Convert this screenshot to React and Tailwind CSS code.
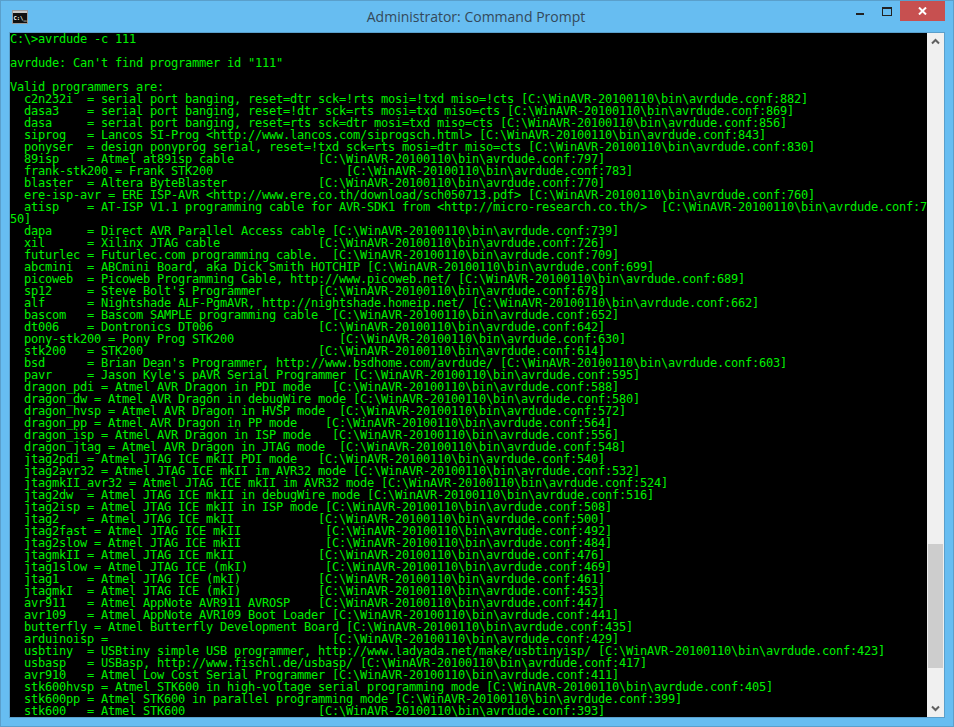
const P = "C:\\WinAVR-20100110\\bin\\avrdude.conf:";
const r = (head, col, n) => (col ? head.padEnd(col, " ") : head + " ") + "[" + P + n + "]";

const lines = [
  "C:\\>avrdude -c 111",
  " ",
  "avrdude: Can't find programmer id \"111\"",
  " ",
  "Valid programmers are:",
  r("  c2n232i  = serial port banging, reset=dtr sck=!rts mosi=!txd miso=!cts", 0, 882),
  r("  dasa3    = serial port banging, reset=!dtr sck=rts mosi=txd miso=cts", 0, 869),
  r("  dasa     = serial port banging, reset=rts sck=dtr mosi=txd miso=cts", 0, 856),
  r("  siprog   = Lancos SI-Prog <http://www.lancos.com/siprogsch.html>", 0, 843),
  r("  ponyser  = design ponyprog serial, reset=!txd sck=rts mosi=dtr miso=cts", 0, 830),
  r("  89isp    = Atmel at89isp cable", 44, 797),
  r("  frank-stk200 = Frank STK200", 48, 783),
  r("  blaster  = Altera ByteBlaster", 44, 770),
  r("  ere-isp-avr = ERE ISP-AVR <http://www.ere.co.th/download/sch050713.pdf>", 0, 760),
  "  atisp    = AT-ISP V1.1 programming cable for AVR-SDK1 from <http://micro-research.co.th/>  [" + P + "7",
  "50]",
  r("  dapa     = Direct AVR Parallel Access cable", 46, 739),
  r("  xil      = Xilinx JTAG cable", 44, 726),
  r("  futurlec = Futurlec.com programming cable.", 46, 709),
  r("  abcmini  = ABCmini Board, aka Dick Smith HOTCHIP", 0, 699),
  r("  picoweb  = Picoweb Programming Cable, http://www.picoweb.net/", 0, 689),
  r("  sp12     = Steve Bolt's Programmer", 44, 678),
  r("  alf      = Nightshade ALF-PgmAVR, http://nightshade.homeip.net/", 0, 662),
  r("  bascom   = Bascom SAMPLE programming cable", 46, 652),
  r("  dt006    = Dontronics DT006", 44, 642),
  r("  pony-stk200 = Pony Prog STK200", 47, 630),
  r("  stk200   = STK200", 44, 614),
  r("  bsd      = Brian Dean's Programmer, http://www.bsdhome.com/avrdude/", 0, 603),
  r("  pavr     = Jason Kyle's pAVR Serial Programmer", 0, 595),
  r("  dragon_pdi = Atmel AVR Dragon in PDI mode", 46, 588),
  r("  dragon_dw = Atmel AVR Dragon in debugWire mode", 0, 580),
  r("  dragon_hvsp = Atmel AVR Dragon in HVSP mode", 47, 572),
  r("  dragon_pp = Atmel AVR Dragon in PP mode", 45, 564),
  r("  dragon_isp = Atmel AVR Dragon in ISP mode", 46, 556),
  r("  dragon_jtag = Atmel AVR Dragon in JTAG mode", 47, 548),
  r("  jtag2pdi = Atmel JTAG ICE mkII PDI mode", 44, 540),
  r("  jtag2avr32 = Atmel JTAG ICE mkII im AVR32 mode", 0, 532),
  r("  jtagmkII_avr32 = Atmel JTAG ICE mkII im AVR32 mode", 0, 524),
  r("  jtag2dw  = Atmel JTAG ICE mkII in debugWire mode", 0, 516),
  r("  jtag2isp = Atmel JTAG ICE mkII in ISP mode", 0, 508),
  r("  jtag2    = Atmel JTAG ICE mkII", 44, 500),
  r("  jtag2fast = Atmel JTAG ICE mkII", 45, 492),
  r("  jtag2slow = Atmel JTAG ICE mkII", 45, 484),
  r("  jtagmkII = Atmel JTAG ICE mkII", 44, 476),
  r("  jtag1slow = Atmel JTAG ICE (mkI)", 45, 469),
  r("  jtag1    = Atmel JTAG ICE (mkI)", 44, 461),
  r("  jtagmkI  = Atmel JTAG ICE (mkI)", 44, 453),
  r("  avr911   = Atmel AppNote AVR911 AVROSP", 44, 447),
  r("  avr109   = Atmel AppNote AVR109 Boot Loader", 46, 441),
  r("  butterfly = Atmel Butterfly Development Board", 0, 435),
  r("  arduinoisp =", 46, 429),
  r("  usbtiny  = USBtiny simple USB programmer, http://www.ladyada.net/make/usbtinyisp/", 0, 423),
  r("  usbasp   = USBasp, http://www.fischl.de/usbasp/", 0, 417),
  r("  avr910   = Atmel Low Cost Serial Programmer", 0, 411),
  r("  stk600hvsp = Atmel STK600 in high-voltage serial programming mode", 0, 405),
  r("  stk600pp = Atmel STK600 in parallel programming mode", 0, 399),
  r("  stk600   = Atmel STK600", 44, 393),
];

function Chevron({ down }) {
  return (
    <svg width="9" height="7" viewBox="0 0 9 7" className="block" fill="none">
      <path
        d={down ? "M1 1.5 L4.5 5 L8 1.5" : "M1 5.5 L4.5 2 L8 5.5"}
        stroke="#606060"
        strokeWidth="2"
      />
    </svg>
  );
}

export default function App() {
  return (
    <div className="w-[954px] h-[727px] flex flex-col bg-[#67bdf1] border border-[#5a9fcb] overflow-hidden">
      <div className="h-[31px] shrink-0 relative flex items-start">
        <svg width="16" height="14" viewBox="0 0 16 14" className="absolute left-[11px] top-[9px]">
          <rect x="0.5" y="0.5" width="15" height="13" fill="#111" stroke="#9a9a9a" />
          <rect x="1" y="1" width="14" height="2" fill="#c8c8c8" />
          <text x="1.5" y="10" fontSize="5.5" fontWeight="700" fill="#fff" fontFamily="'DejaVu Sans Mono', monospace">C:\_</text>
        </svg>
        <div className="w-full text-center text-[14px] leading-[20px] pt-[6px] pr-[2px] text-[#34495a] font-['Open_Sans','Noto_Sans',sans-serif]">
          Administrator: Command Prompt
        </div>
        <div className="absolute left-[855px] top-[12px] w-[8px] h-[2px] bg-[#222]" />
        <div className="absolute left-[881px] top-[6px] w-[10px] h-[9px] border border-[#222] border-t-2" />
        <div className="absolute left-[899px] top-0 w-[45px] h-[20px] bg-[#c75050] flex items-center justify-center">
          <svg width="9" height="8" viewBox="0 0 9 8" fill="none">
            <path d="M1 0.5 L8 7.5 M8 0.5 L1 7.5" stroke="#fff" strokeWidth="2" />
          </svg>
        </div>
      </div>
      <div className="ml-[8px] w-[936px] h-[686px] border border-[#5a9fcb] flex bg-black shrink-0">
        <div className="w-[917px] h-[684px] overflow-hidden bg-black text-[#00f000] font-['DejaVu_Sans_Mono',monospace] text-[12px] leading-[12px] tracking-[-0.224px] whitespace-pre">
          {lines.map((l, i) => (
            <div key={i} className="h-[12px]">{l}</div>
          ))}
        </div>
        <div className="w-[17px] h-[684px] bg-[#f0f0f0] flex flex-col items-center">
          <div className="h-[17px] shrink-0 flex items-center justify-center">
            <Chevron />
          </div>
          <div className="h-[494px] shrink-0" />
          <div className="w-[15px] h-[124px] shrink-0 bg-[#cdcdcd]" />
          <div className="flex-1 flex items-end pb-[5px]">
            <Chevron down />
          </div>
        </div>
      </div>
    </div>
  );
}
